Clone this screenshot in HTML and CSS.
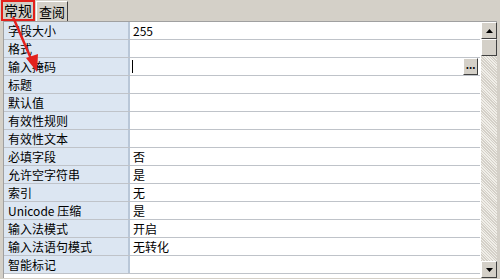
FILE: index.html
```html
<!DOCTYPE html>
<html lang="zh">
<head>
<meta charset="utf-8">
<link rel="stylesheet" href="styles.css">
</head>
<body>
<div class="window">
  <div class="tabs">
    <div class="tab active">常规</div>
    <div class="tab">查阅</div>
  </div>
  <div class="frame">
    <div class="grid">
      <div class="row"><div class="label">字段大小</div><div class="value">255</div></div>
      <div class="row"><div class="label">格式</div><div class="value"></div></div>
      <div class="row"><div class="label">输入掩码</div><div class="value current"><span class="caret"></span><span class="dots">...</span></div></div>
      <div class="row"><div class="label">标题</div><div class="value"></div></div>
      <div class="row"><div class="label">默认值</div><div class="value"></div></div>
      <div class="row"><div class="label">有效性规则</div><div class="value"></div></div>
      <div class="row"><div class="label">有效性文本</div><div class="value"></div></div>
      <div class="row"><div class="label">必填字段</div><div class="value">否</div></div>
      <div class="row"><div class="label">允许空字符串</div><div class="value">是</div></div>
      <div class="row"><div class="label">索引</div><div class="value">无</div></div>
      <div class="row"><div class="label">Unicode 压缩</div><div class="value">是</div></div>
      <div class="row"><div class="label">输入法模式</div><div class="value">开启</div></div>
      <div class="row"><div class="label">输入法语句模式</div><div class="value">无转化</div></div>
      <div class="row"><div class="label">智能标记</div><div class="value"></div></div>
    </div>
    <div class="scrollbar">
      <div class="sbtn"><svg width="7" height="4" viewBox="0 0 7 4"><path d="M0 4L3.5 0L7 4Z" fill="#000"/></svg></div>
      <div class="thumb"></div>
      <div class="track"></div>
      <div class="sbtn"><svg width="7" height="4" viewBox="0 0 7 4"><path d="M0 0L3.5 4L7 0Z" fill="#000"/></svg></div>
    </div>
  </div>
  <svg class="arrow" width="60" height="80" viewBox="0 0 60 80">
    <line x1="13" y1="17" x2="32" y2="61" stroke="#e3211c" stroke-width="2.5"/>
    <path d="M37 72L26 58L38 54Z" fill="#e3211c"/>
  </svg>
</div>
</body>
</html>
```

FILE: styles.css
```css
html, body {
  margin: 0;
  padding: 0;
  background: #d4d0c8;
}
body {
  width: 500px;
  height: 279px;
  overflow: hidden;
  font-family: "Noto Sans CJK SC", "Liberation Sans", sans-serif;
  font-size: 12px;
  color: #000;
}
.window {
  position: relative;
  width: 500px;
  height: 279px;
  background: #d4d0c8;
}
.tabs {
  display: flex;
  height: 21px;
  padding-left: 1px;
  align-items: flex-end;
}
.tab {
  height: 19px;
  line-height: 19px;
  padding: 0 2px;
  border: 1px solid #fff;
  border-right-color: #404040;
  border-bottom: none;
  background: #d4d0c8;
  font-size: 13px;
}
.tab.active {
  height: 17px;
  border: 2px solid #e3211c;
  line-height: 17px;
  padding: 0 1px;
  margin-right: 1px;
  font-size: 14px;
}
.frame {
  display: flex;
  height: 256px;
  margin-left: 3px;
  margin-right: 3px;
  border-top: 1px solid #a0a0a0;
  border-left: 1px solid #a0a0a0;
  background: #fff;
}
.grid {
  flex: 1;
  display: flex;
  flex-direction: column;
  background: #fff;
}
.row {
  display: flex;
  height: 18px;
  border-bottom: 1px solid #bfc3c9;
  box-sizing: border-box;
}
.label {
  width: 120px;
  padding-left: 4px;
  background: #dce6f2;
  border-right: 2px solid #b9c7d8;
  line-height: 17px;
  white-space: nowrap;
}
.value {
  flex: 1;
  position: relative;
  padding-left: 3px;
  line-height: 17px;
  background: #fff;
}
.caret {
  position: absolute;
  left: 2px;
  top: 2px;
  width: 1px;
  height: 13px;
  background: #000;
}
.dots {
  position: absolute;
  right: 2px;
  top: 0;
  width: 13px;
  height: 15px;
  line-height: 11px;
  font-size: 10px;
  font-weight: bold;
  text-align: center;
  background: #d4d0c8;
  border: 1px solid #fff;
  border-right-color: #404040;
  border-bottom-color: #404040;
}
.scrollbar {
  width: 16px;
  display: flex;
  flex-direction: column;
  margin-left: 1px;
  background: #e8e6e0;
  background-image: repeating-linear-gradient(45deg, #d4d0c8 0 1px, #f0eee8 1px 2px);
}
.sbtn, .thumb {
  height: 15px;
  background: #d4d0c8;
  border: 1px solid #fff;
  border-right-color: #404040;
  border-bottom-color: #404040;
  display: flex;
  align-items: center;
  justify-content: center;
}
.track { flex: 1; }
.arrow {
  position: absolute;
  left: 0;
  top: 0;
  pointer-events: none;
}
```
